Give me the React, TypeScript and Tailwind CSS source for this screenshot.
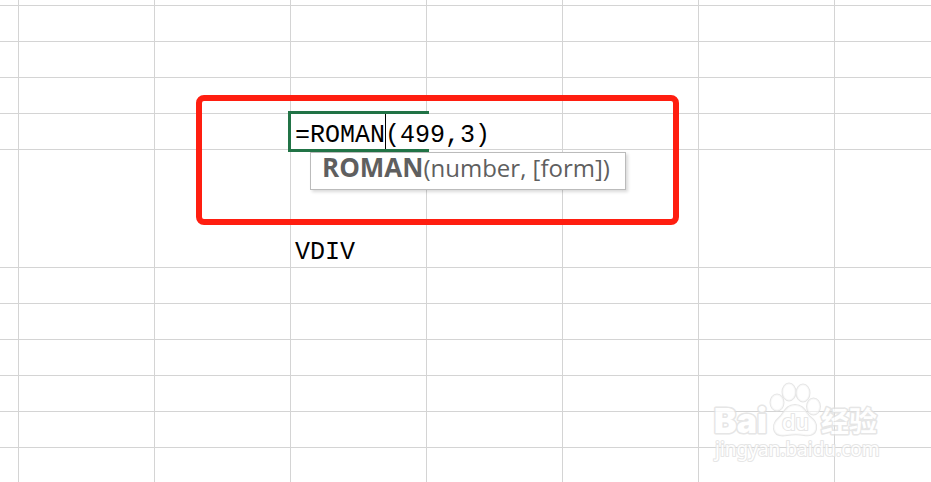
import React, { useState } from 'react';

// Column C of these rows holds the edited formula and the result text
const rows = [
  { height: 'h-[6px]', text: '' },
  { height: 'h-9', text: '' },
  { height: 'h-9', text: '' },
  { height: 'h-9', text: '' },
  { height: 'h-9', text: '', editing: true },
  { height: 'h-[118px]', text: 'VDIV' },
  { height: 'h-9', text: '' },
  { height: 'h-9', text: '' },
  { height: 'h-9', text: '' },
  { height: 'h-9', text: '' },
  { height: 'h-9', text: '' },
  { height: 'h-9', text: '' },
];

const columns = [0, 1, 2, 3, 4, 5, 6, 7];

function FormulaEditor() {
  const [formula, setFormula] = useState('=ROMAN(499,3)');

  return (
    <div className="absolute -left-[3px] -top-[3px] z-10 flex flex-col items-start">
      {/* Active cell frame, open on the right while the text spills over */}
      <div className="relative flex w-[141px] border-y-[3px] border-l-[3px] border-[#217346]">
        <input
          type="text"
          aria-label="Formula"
          value={formula}
          onChange={e => setFormula(e.target.value)}
          className="h-[35px] w-[199px] shrink-0 bg-white pl-1 pt-2 text-[25px] leading-7 text-black outline-none"
        />
        <div className="absolute inset-y-0 left-[94px] w-px bg-black" />
      </div>
      <div className="ml-[22px] h-[38px] w-[316px] whitespace-nowrap border border-[#bbbbbb] bg-white pl-[11px] font-['Open_Sans',sans-serif] text-[24px] leading-7 text-[#5f5f5f] shadow-[2px_2px_3px_rgba(0,0,0,0.15)]">
        <b className="text-[26px]">ROMAN</b>(number, [form])
      </div>
    </div>
  );
}

function Watermark() {
  return (
    <svg
      viewBox="0 0 180 90"
      className="absolute bottom-3 right-[43px] h-[90px] w-[180px]"
      fill="#ffffff"
      stroke="#e0e0e0"
      strokeWidth="3"
      strokeLinejoin="round"
      paintOrder="stroke"
      opacity="0.8"
    >
      <text x="6" y="53" fontFamily="Inter, sans-serif" fontWeight="900" fontSize="34">Bai</text>
      <g fillOpacity="0.7" strokeWidth="2">
        <ellipse cx="69" cy="22.5" rx="6.5" ry="8" />
        <ellipse cx="81" cy="12" rx="6.5" ry="8.5" />
        <ellipse cx="95" cy="13" rx="6.5" ry="8.5" />
        <ellipse cx="105.5" cy="26.5" rx="6.5" ry="8" />
        <path d="M87 25C95 25 97 31 101 36C106 40 109 43 108 49C107 55 101 56 96 55C91 54 85 54 79 55C73 56 67 55 66 49C65 43 69 40 73 36C77 31 79 25 87 25Z" />
      </g>
      <text x="74" y="50" fontFamily="Inter, sans-serif" fontWeight="500" fontSize="22" strokeWidth="2">du</text>
      <text x="113" y="52" fontFamily="'Noto Sans CJK SC', sans-serif" fontWeight="700" fontSize="28">经验</text>
      <text x="7" y="76" fontFamily="'Noto Sans', sans-serif" fontWeight="400" fontSize="19" strokeWidth="2">jingyan.baidu.com</text>
    </svg>
  );
}

export default function App() {
  return (
    <main className="relative h-screen overflow-hidden bg-white font-['Liberation_Mono',monospace]">
      <table className="w-full table-fixed border-separate border-spacing-0">
        <colgroup>
          <col className="w-[19px]" />
          <col className="w-[136px]" />
          <col className="w-[136px]" />
          <col className="w-[136px]" />
          <col className="w-[136px]" />
          <col className="w-[136px]" />
          <col className="w-[136px]" />
          <col />
        </colgroup>
        <tbody>
          {rows.map((row, i) => (
            <tr key={i} className={row.height}>
              {columns.map(col => (
                <td key={col} className="relative border-b border-r border-[#d4d4d4] p-0 align-bottom last:border-r-0">
                  {col === 3 && row.text && (
                    <span className="block pl-1 text-[25px] leading-7 text-black">{row.text}</span>
                  )}
                  {col === 3 && row.editing && <FormulaEditor />}
                </td>
              ))}
            </tr>
          ))}
        </tbody>
      </table>

      {/* Red highlight around the formula */}
      <div className="pointer-events-none absolute left-[196px] top-[95px] h-[130px] w-[483px] rounded-lg border-[6px] border-[#ff1e10]" />

      <Watermark />
    </main>
  );
}
